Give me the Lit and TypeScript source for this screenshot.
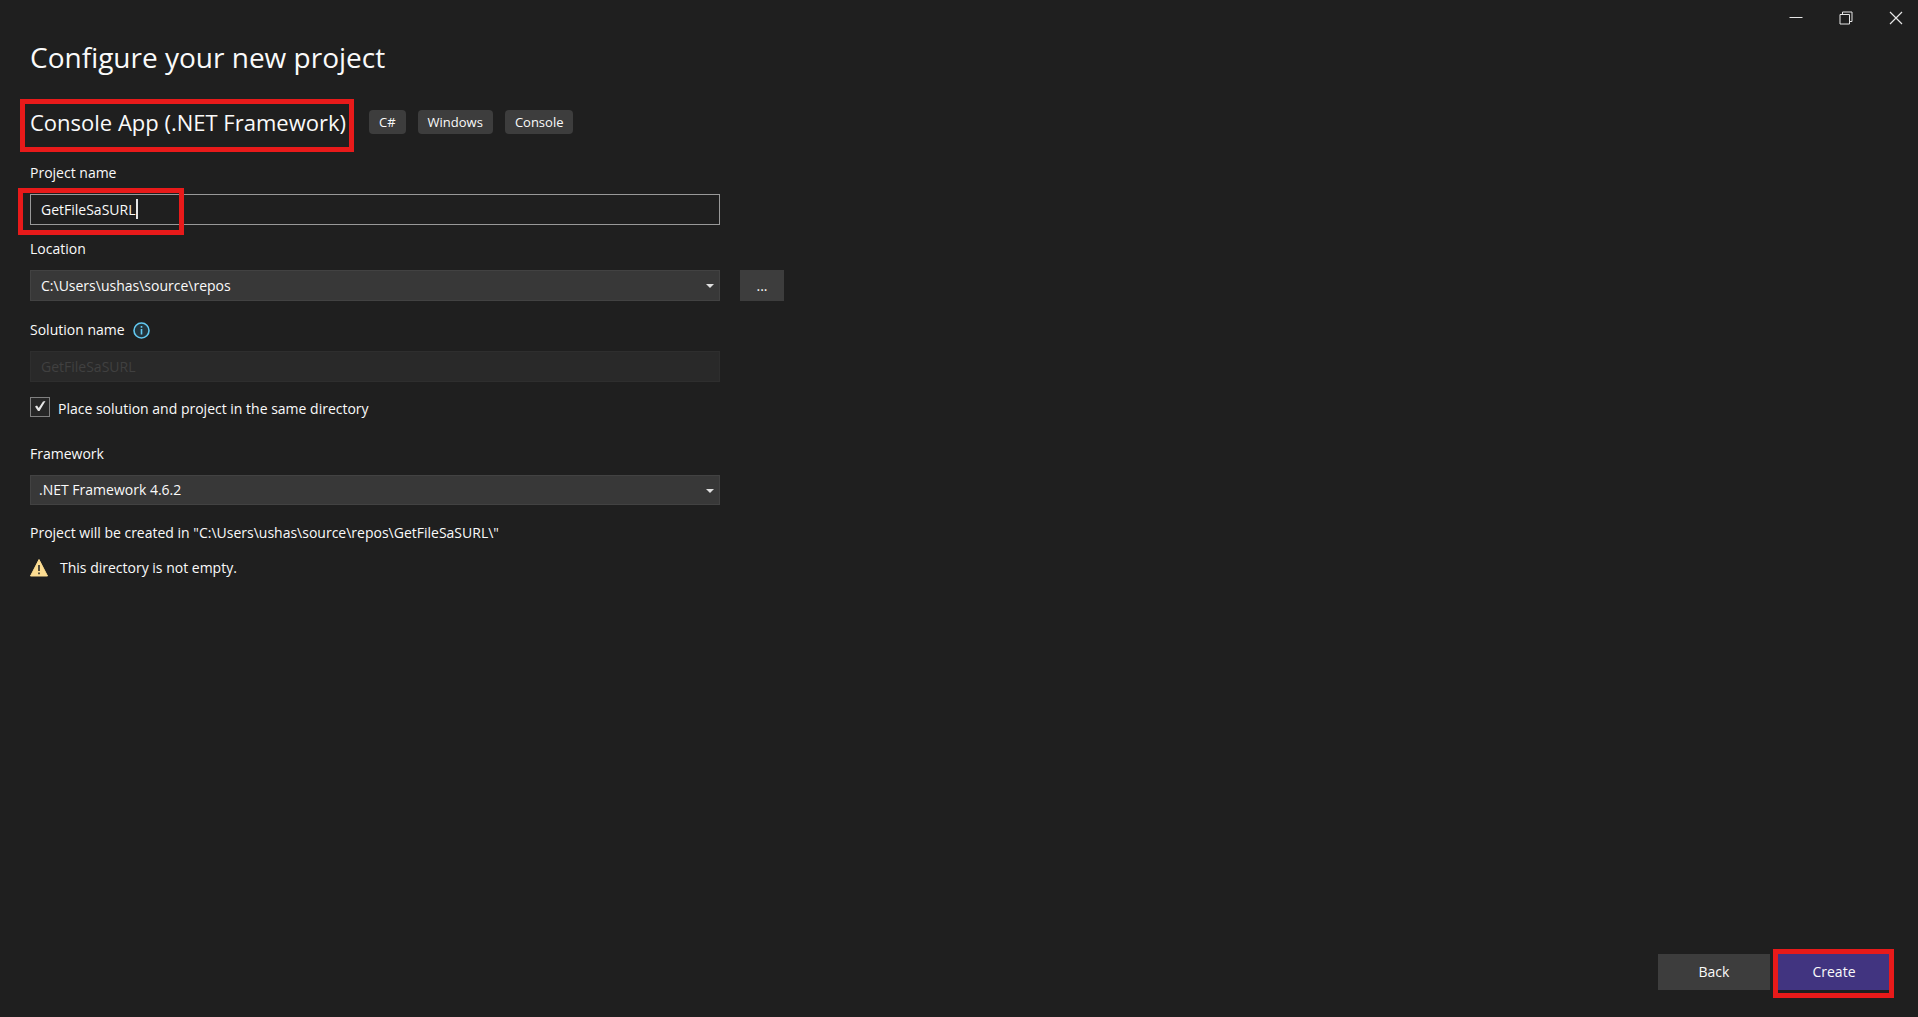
import { LitElement, html, css } from "lit";
import { customElement, state } from "lit/decorators.js";

@customElement("app-root")
export class AppRoot extends LitElement {
  @state() private projectName = "GetFileSaSURL";
  @state() private location = "C:\\Users\\ushas\\source\\repos";
  @state() private sameDirectory = true;

  static styles = css`
    :host {
      display: block;
      font-family: "Open Sans", "Noto Sans", sans-serif;
      font-size: 14px;
      line-height: 20px;
      color: #fafafa;
    }
    * {
      box-sizing: border-box;
    }
    .window {
      min-height: 100vh;
      display: flex;
      flex-direction: column;
      background: #1f1f1f;
    }
    .titlebar {
      display: flex;
      justify-content: flex-end;
      gap: 6px;
      height: 36px;
    }
    .caption {
      width: 44px;
      height: 36px;
      padding: 0;
      border: 0;
      background: none;
      color: #e6e6e6;
      display: grid;
      place-items: center;
    }
    svg {
      display: block;
    }
    main {
      flex: 1;
      padding: 0 30px;
    }
    h1,
    h2,
    p {
      margin: 0;
      font-weight: 400;
    }
    h1 {
      font-size: 28px;
      line-height: 42px;
    }
    .template {
      display: flex;
      align-items: center;
      gap: 20px;
      height: 40px;
      margin: 24px 0 21px;
    }
    h2 {
      font-size: 22px;
      line-height: 40px;
      padding-right: 3px;
    }
    .tags {
      display: flex;
      gap: 12px;
      margin: 0;
      padding: 0;
      list-style: none;
    }
    .tag {
      padding: 2px 10px;
      border-radius: 4px;
      background: #3d3d3d;
      font-size: 13px;
    }
    .marked {
      position: relative;
    }
    .mark {
      position: absolute;
      border: 5px solid #e81a1a;
      pointer-events: none;
    }
    .mark-template {
      inset: -3px -5px -10px -10px;
    }
    .mark-name {
      left: -12px;
      top: -6px;
      width: 166px;
      height: 47px;
    }
    .mark-create {
      inset: -5px -4px -8px -5px;
    }
    .form {
      display: flex;
      flex-direction: column;
    }
    .field {
      display: flex;
      flex-direction: column;
      gap: 11px;
      margin-bottom: 14px;
    }
    .field.spaced {
      margin-bottom: 19px;
    }
    .field.last {
      margin-bottom: 18px;
    }
    .label-row {
      display: flex;
      align-items: center;
      gap: 8px;
    }
    .row {
      display: flex;
      gap: 20px;
    }
    .control {
      position: relative;
      flex: 0 1 690px;
    }
    .box {
      display: block;
      width: 100%;
      height: 31px;
      margin: 0;
      padding: 0 10px;
      border: 1px solid #424242;
      border-radius: 0;
      outline: none;
      background: #383838;
      color: #fafafa;
      font: inherit;
      appearance: none;
    }
    .box.text {
      border-color: #999999;
      background: #1f1f1f;
    }
    .box:disabled {
      border-color: #2e2e2e;
      background: #292929;
      color: #404040;
    }
    .box.compact {
      height: 30px;
      padding: 0 8px;
    }
    .arrow {
      position: absolute;
      right: 6px;
      top: 14px;
      pointer-events: none;
    }
    .caret {
      position: absolute;
      left: 106px;
      top: 5px;
      width: 2px;
      height: 20px;
      background: #e6e6e6;
    }
    .button {
      border: 0;
      padding: 0;
      background: #3d3d3d;
      color: #fafafa;
      font: inherit;
    }
    .browse {
      width: 44px;
      height: 31px;
    }
    .check {
      display: flex;
      align-items: flex-start;
      gap: 8px;
      line-height: 24px;
      margin: 1px 0 23px;
    }
    .tick-wrap {
      position: relative;
      width: 20px;
      height: 20px;
    }
    .tick-box {
      appearance: none;
      display: block;
      width: 20px;
      height: 20px;
      margin: 0;
      border: 1px solid #808080;
      background: #262626;
    }
    .tick {
      position: absolute;
      inset: 0;
      pointer-events: none;
    }
    .warning {
      display: flex;
      align-items: center;
      gap: 12px;
      margin-top: 15px;
    }
    footer {
      display: flex;
      justify-content: flex-end;
      gap: 8px;
      padding: 0 28px 27px;
    }
    .action {
      width: 112px;
      height: 36px;
    }
    .primary {
      display: block;
      background: #413480;
    }
  `;

  private arrow() {
    return html`<svg class="arrow" width="8" height="4" viewBox="0 0 8 4" aria-hidden="true">
      <path d="M0 0H8L4 4Z" fill="#e0e0e0" />
    </svg>`;
  }

  render() {
    return html`
      <div class="window">
        <div class="titlebar">
          <button class="caption" aria-label="Minimize">
            <svg width="14" height="14" viewBox="0 0 14 14">
              <path d="M0.5 6.5H13.5" stroke="currentColor" />
            </svg>
          </button>
          <button class="caption" aria-label="Restore">
            <svg width="14" height="14" viewBox="0 0 14 14" fill="none" stroke="currentColor">
              <path d="M1 3.5H10.5V13H1Z M3.5 3.5V1H13V10.5H10.5" />
            </svg>
          </button>
          <button class="caption" aria-label="Close">
            <svg width="14" height="14" viewBox="0 0 14 14">
              <path d="M1 1L13 13M13 1L1 13" stroke="currentColor" stroke-width="1.2" />
            </svg>
          </button>
        </div>

        <main>
          <h1>Configure your new project</h1>
          <div class="template">
            <h2 class="marked">Console App (.NET Framework)<span class="mark mark-template"></span></h2>
            <ul class="tags">
              ${["C#", "Windows", "Console"].map((t) => html`<li class="tag">${t}</li>`)}
            </ul>
          </div>

          <form class="form" @submit=${(e: Event) => e.preventDefault()}>
            <div class="field">
              <label for="name">Project name</label>
              <div class="row">
                <div class="control">
                  <input
                    id="name"
                    class="box text"
                    type="text"
                    spellcheck="false"
                    .value=${this.projectName}
                    @input=${(e: Event) => (this.projectName = (e.target as HTMLInputElement).value)}
                  />
                  <span class="caret"></span>
                  <span class="mark mark-name"></span>
                </div>
              </div>
            </div>

            <div class="field spaced">
              <label for="location">Location</label>
              <div class="row">
                <div class="control">
                  <select id="location" class="box">
                    <option>${this.location}</option>
                  </select>
                  ${this.arrow()}
                </div>
                <button type="button" class="button browse" aria-label="Browse">...</button>
              </div>
            </div>

            <div class="field">
              <div class="label-row">
                <label for="solution">Solution name</label>
                <svg width="17" height="17" viewBox="0 0 17 17" aria-hidden="true">
                  <circle cx="8.5" cy="8.5" r="7.5" fill="#23343c" stroke="#62c8f0" stroke-width="1.6" />
                  <path d="M8.5 7V12.5M8.5 4V5.8" stroke="#62c8f0" stroke-width="1.6" />
                </svg>
              </div>
              <div class="row">
                <div class="control">
                  <input id="solution" class="box" type="text" .value=${this.projectName} disabled />
                </div>
              </div>
            </div>

            <div class="check">
              <span class="tick-wrap">
                <input
                  id="same"
                  class="tick-box"
                  type="checkbox"
                  .checked=${this.sameDirectory}
                  @change=${(e: Event) => (this.sameDirectory = (e.target as HTMLInputElement).checked)}
                />
                ${this.sameDirectory
                  ? html`<svg class="tick" width="20" height="20" viewBox="0 0 20 20" aria-hidden="true">
                      <path d="M5 9.5L7 8.5L8.7 11L13 4.5L15.5 4L9.5 14H8Z" fill="#e6e6e6" />
                    </svg>`
                  : ""}
              </span>
              <label for="same">Place solution and project in the same directory</label>
            </div>

            <div class="field last">
              <label for="framework">Framework</label>
              <div class="row">
                <div class="control">
                  <select id="framework" class="box compact">
                    <option>.NET Framework 4.6.2</option>
                  </select>
                  ${this.arrow()}
                </div>
              </div>
            </div>

            <p>Project will be created in "${this.location}\\${this.projectName}\\"</p>
            <p class="warning">
              <svg width="18" height="18" viewBox="0 0 18 18" aria-hidden="true">
                <path d="M9 0.5L17.5 17H0.5Z" fill="#fcdc92" stroke="#fcdc92" stroke-linejoin="round" />
                <path d="M9 6V12M9 13.5V15.2" stroke="#1f1f1f" stroke-width="1.5" />
              </svg>
              <span>This directory is not empty.</span>
            </p>
          </form>
        </main>

        <footer>
          <button class="button action">Back</button>
          <div class="marked">
            <button class="button action primary">Create</button>
            <span class="mark mark-create"></span>
          </div>
        </footer>
      </div>
    `;
  }
}
